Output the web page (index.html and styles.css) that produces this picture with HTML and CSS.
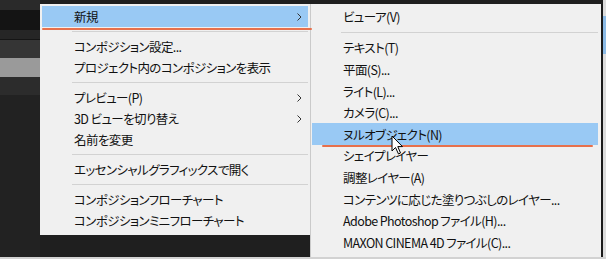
FILE: index.html
```html
<!DOCTYPE html>
<html lang="ja">
<head>
    <meta charset="UTF-8">
    <meta name="viewport" content="width=device-width, initial-scale=1.0">
    <title>コンテキストメニュー</title>
    <link rel="stylesheet" href="styles.css">
</head>
<body>
    <div class="screen">
        <!-- app panel peeking out on the left -->
        <div class="app-edge">
            <div class="band b1"></div>
            <div class="band b2"></div>
            <div class="band b3"></div>
            <div class="band b4"></div>
            <div class="band b5"></div>
            <div class="band b6"></div>
        </div>

        <div class="menu main-menu">
            <div class="item active marked">
                <span>新規</span>
                <svg class="chev" width="5" height="8" viewBox="0 0 5 8"><polyline points="0.5,0.5 4,4 0.5,7.5"/></svg>
            </div>
            <div class="sep"></div>
            <div class="item"><span>コンポジション設定...</span></div>
            <div class="item"><span>プロジェクト内のコンポジションを表示</span></div>
            <div class="sep"></div>
            <div class="item">
                <span>プレビュー(P)</span>
                <svg class="chev" width="5" height="8" viewBox="0 0 5 8"><polyline points="0.5,0.5 4,4 0.5,7.5"/></svg>
            </div>
            <div class="item">
                <span>3D ビューを切り替え</span>
                <svg class="chev" width="5" height="8" viewBox="0 0 5 8"><polyline points="0.5,0.5 4,4 0.5,7.5"/></svg>
            </div>
            <div class="item"><span>名前を変更</span></div>
            <div class="sep"></div>
            <div class="item"><span>エッセンシャルグラフィックスで開く</span></div>
            <div class="sep"></div>
            <div class="item"><span>コンポジションフローチャート</span></div>
            <div class="item"><span>コンポジションミニフローチャート</span></div>
        </div>

        <div class="menu sub-menu">
            <div class="item"><span>ビューア(V)</span></div>
            <div class="sep"></div>
            <div class="item"><span>テキスト(T)</span></div>
            <div class="item"><span>平面(S)...</span></div>
            <div class="item"><span>ライト(L)...</span></div>
            <div class="item"><span>カメラ(C)...</span></div>
            <div class="item active marked"><span>ヌルオブジェクト(N)</span></div>
            <div class="item"><span>シェイプレイヤー</span></div>
            <div class="item"><span>調整レイヤー(A)</span></div>
            <div class="item"><span>コンテンツに応じた塗りつぶしのレイヤー...</span></div>
            <div class="item"><span>Adobe Photoshop ファイル(H)...</span></div>
            <div class="item"><span>MAXON CINEMA 4D ファイル(C)...</span></div>
        </div>

        <div class="right-edge">
            <div class="blip"></div>
        </div>

        <svg class="cursor" width="14" height="21" viewBox="0 0 14 21">
            <path d="M1 1 L1 16 L4.5 12.5 L7.5 19 L9.5 18 L6.8 11.6 L11.5 11.6 Z"/>
        </svg>
    </div>
</body>
</html>
```

FILE: styles.css
```css
* {
    box-sizing: border-box;
}

body {
    margin: 0;
    background: #1f1f1f;
    font-family: "Noto Sans CJK JP", "Liberation Sans", sans-serif;
    font-feature-settings: "palt";
}

.screen {
    position: relative;
    width: 606px;
    height: 259px;
    display: flex;
    align-items: flex-start;
    background: #1f1f1f;
    border-bottom: 2px solid #d2d2d2;
    overflow: hidden;
}

.app-edge {
    width: 40px;
    height: 100%;
    display: flex;
    flex-direction: column;
    background: #222;
}

.band { width: 100%; }
.b1 { height: 10px; background: #2a2a2a; }
.b2 { height: 20px; background: #141414; }
.b3 { height: 10px; background: #262626; border-bottom: 1px solid #151515; }
.b4 { height: 18px; background: #353535; }
.b5 { height: 19px; background: #9a9a9a; }
.b6 { height: 18px; background: #2c2c2c; }

.menu {
    margin-top: 4px;
    background: #f0f0f0;
    color: #111;
    font-size: 12.5px;
    letter-spacing: -0.6px;
}

.main-menu {
    width: 270px;
    padding: 2px 2px 4px 2px;
}

.sub-menu {
    width: 293px;
    height: 253px;
    padding: 2px 3px 0 1px;
    border-left: 1px solid #cacaca;
    border-right: 2px solid #1b1b1b;
}

.item {
    position: relative;
    display: flex;
    align-items: center;
    height: 21px;
    padding-left: 32px;
    padding-right: 6px;
    white-space: nowrap;
}

.sub-menu .item {
    height: 21.6px;
    padding-left: 31px;
}

.item.active {
    background: #99c9f4;
}

/* hand-drawn orange underline */
.item.marked::after {
    content: "";
    position: absolute;
    left: 0;
    right: -4px;
    bottom: -3px;
    height: 2.5px;
    border-radius: 2px;
    background: #e7704c;
}

.sub-menu .item.marked::after {
    left: 10px;
    right: 5px;
    bottom: -2px;
}

.chev {
    margin-left: auto;
    fill: none;
    stroke: #333;
    stroke-width: 1;
}

.sep {
    height: 9px;
    display: flex;
    align-items: center;
    padding-left: 30px;
}

.sep::before {
    content: "";
    flex: 1;
    height: 1px;
    background: #d2d2d2;
}

.sub-menu .sep {
    height: 9.5px;
    padding-left: 29px;
}

.right-edge {
    width: 3px;
    height: 100%;
    background: #dcdcdc;
    padding-top: 16px;
}

.blip {
    height: 38px;
    background: #8cbbe6;
}

.cursor {
    position: absolute;
    left: 391px;
    top: 135px;
    fill: #fff;
    stroke: #000;
    stroke-width: 1;
    stroke-linejoin: round;
}
```
